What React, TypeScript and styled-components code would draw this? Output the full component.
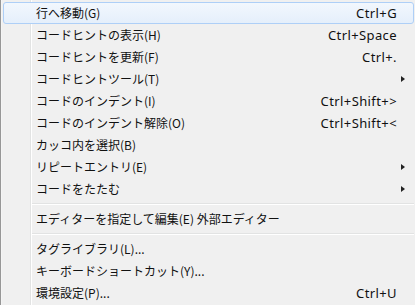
import React from "react";
import styled, { createGlobalStyle } from "styled-components";

const Global = createGlobalStyle`
  html, body { margin: 0; padding: 0; background: #f0f0f0; overflow: hidden; }
  body { width: 415px; height: 305px; }
`;

const Menu = styled.div`
  position: relative;
  width: 430px;
  height: 305px;
  box-sizing: border-box;
  background: #f0f0f0;
  border-left: 1px solid #979797;
  box-shadow: inset 1px 0 0 #f5f5f5;
  padding: 2px 0 0 2px;
  font-family: "Noto Sans CJK JP", "Noto Sans", sans-serif;
  font-size: 12px;
  color: #111;
`;

const Gutter = styled.div`
  position: absolute;
  top: 0;
  bottom: 0;
  left: 29px;
  width: 1px;
  background: #e2e3e3;
  box-shadow: 1px 0 0 #ffffff;
`;

const List = styled.div`
  position: relative;
  display: flex;
  flex-direction: column;
  width: 411px;
`;

const Row = styled.div<{ $active?: boolean }>`
  height: 22px;
  box-sizing: border-box;
  display: flex;
  align-items: center;
  padding-left: 32px;
  padding-right: 15px;
  border-radius: 3px;
  border: 1px solid ${(p) => (p.$active ? "#aecff7" : "transparent")};
  background: ${(p) =>
    p.$active ? "linear-gradient(#f2f7fd, #e5effb)" : "transparent"};
  white-space: nowrap;
`;

const Label = styled.span`
  flex: 1;
  line-height: 22px;
`;

const Shortcut = styled.span`
  font-family: "Noto Sans", "Open Sans", sans-serif;
  font-size: 13px;
  letter-spacing: 0.4px;
  line-height: 22px;
  color: #111;
  margin-right: 1px;
`;

const Arrow = styled.span`
  width: 0;
  height: 0;
  border-top: 3.5px solid transparent;
  border-bottom: 3.5px solid transparent;
  border-left: 4px solid #222;
  margin-right: -7px;
`;

const Separator = styled.div`
  height: 8px;
  display: flex;
  align-items: center;
  padding-left: 29px;
  &::after {
    content: "";
    flex: 1;
    height: 1px;
    background: #e2e3e3;
    box-shadow: 0 1px 0 #ffffff;
    margin-top: -1px;
  }
`;

type Item =
  | { sep: true }
  | { label: string; shortcut?: string; sub?: boolean; active?: boolean; sep?: false };

const items: Item[] = [
  { label: "行へ移動(G)", shortcut: "Ctrl+G", active: true },
  { label: "コードヒントの表示(H)", shortcut: "Ctrl+Space" },
  { label: "コードヒントを更新(F)", shortcut: "Ctrl+." },
  { label: "コードヒントツール(T)", sub: true },
  { label: "コードのインデント(I)", shortcut: "Ctrl+Shift+>" },
  { label: "コードのインデント解除(O)", shortcut: "Ctrl+Shift+<" },
  { label: "カッコ内を選択(B)" },
  { label: "リピートエントリ(E)", sub: true },
  { label: "コードをたたむ", sub: true },
  { sep: true },
  { label: "エディターを指定して編集(E) 外部エディター" },
  { sep: true },
  { label: "タグライブラリ(L)..." },
  { label: "キーボードショートカット(Y)..." },
  { label: "環境設定(P)...", shortcut: "Ctrl+U" },
];

export default function App() {
  return (
    <>
      <Global />
      <Menu>
        <Gutter />
        <List>
          {items.map((it, i) =>
            it.sep ? (
              <Separator key={i} />
            ) : (
              <Row key={i} $active={it.active}>
                <Label>{it.label}</Label>
                {it.shortcut && <Shortcut>{it.shortcut}</Shortcut>}
                {it.sub && <Arrow />}
              </Row>
            )
          )}
        </List>
      </Menu>
    </>
  );
}
